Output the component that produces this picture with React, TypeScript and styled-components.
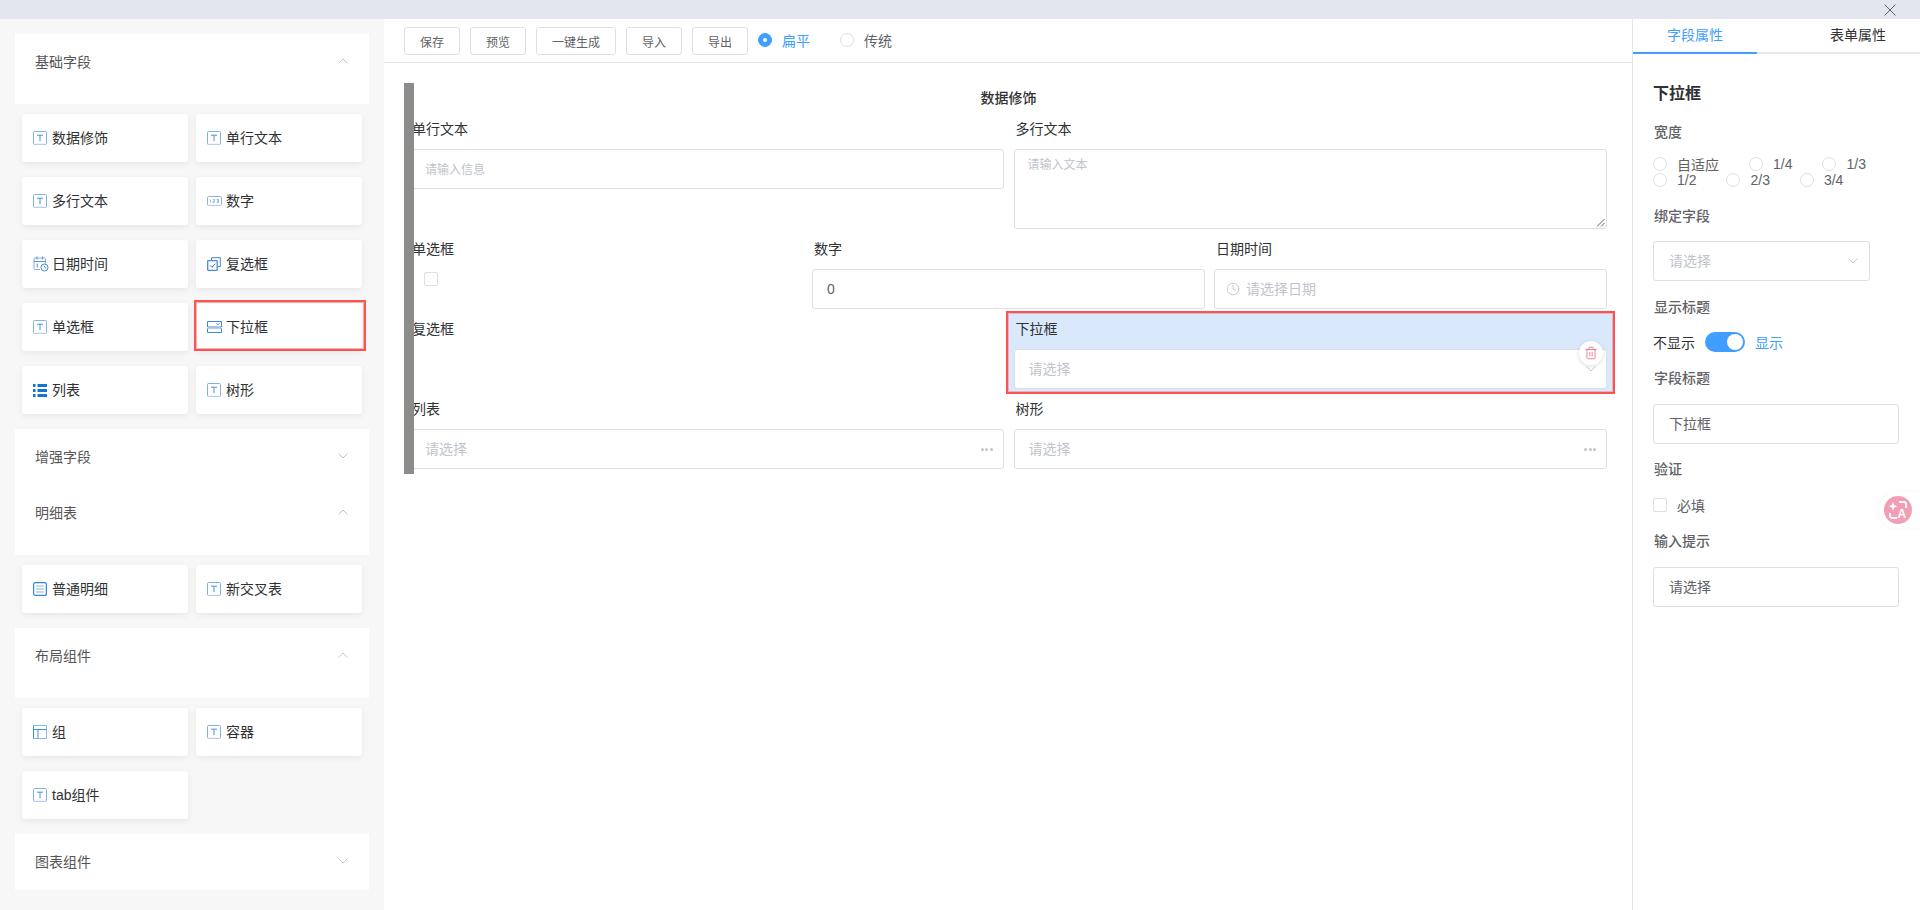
import React from 'react';
import styled, { createGlobalStyle } from 'styled-components';
import { Trash2, Clock } from 'lucide-react';

const GlobalStyle = createGlobalStyle`
  html, body { margin: 0; padding: 0; height: 100%; background: #fff; }
  body {
    font-family: "Liberation Sans", "Noto Sans CJK SC", sans-serif;
    font-size: 14px;
    color: #303133;
    overflow: hidden;
  }
  * { box-sizing: border-box; }
`;

const Page = styled.div`
  width: 1920px;
  height: 910px;
  display: flex;
  flex-direction: column;
  overflow: hidden;
`;

const TopBar = styled.div`
  height: 19px;
  flex: none;
  background: #e3e6ee;
  display: flex;
  justify-content: flex-end;
  align-items: center;
  padding-right: 24px;
`;

const Body = styled.div`
  flex: 1;
  display: flex;
  min-height: 0;
`;

/* left column */
const Sidebar = styled.aside`
  width: 384px;
  flex: none;
  background: #f7f7f7;
  padding: 15px 15px 0;
`;

const GroupHeader = styled.div<{ $open?: boolean }>`
  height: ${(p) => (p.$open ? 70 : 56)}px;
  background: #fff;
  padding: 18px 21px 0 20px;
  display: flex;
  justify-content: space-between;
  align-items: flex-start;
  line-height: 20px;
  color: #555;

  svg { margin-top: 6px; }
`;

const CardGrid = styled.div`
  display: grid;
  grid-template-columns: 166px 166px;
  column-gap: 8px;
  row-gap: 15px;
  padding: 10px 7px 15px;
`;

const Card = styled.div<{ $picked?: boolean }>`
  position: relative;
  height: 48px;
  background: #fff;
  border-radius: 3px;
  box-shadow: 0 2px 6px rgba(0, 0, 0, 0.07);
  display: flex;
  align-items: center;
  padding: 0 0 2px 11px;
  color: #303133;

  ${(p) =>
    p.$picked &&
    `
    &::after {
      content: '';
      position: absolute;
      inset: -3px -4px 0 -2px;
      border: 2px solid #fb5454;
      box-shadow: inset 0 0 0 1px rgba(251, 84, 84, 0.45);
    }
  `}
`;

const IconSlot = styled.span`
  width: 19px;
  height: 16px;
  flex: none;
  display: flex;
  align-items: center;
  margin-top: 2px;
  svg { display: block; }
`;

/* middle column */
const Main = styled.main`
  flex: 1;
  min-width: 0;
  background: #fff;
`;

const Toolbar = styled.div`
  height: 44px;
  border-bottom: 1px solid #e4e7ed;
  padding: 8px 0 0 20px;
  display: flex;
  align-items: flex-start;
  gap: 10px;
`;

const ToolButton = styled.button`
  height: 28px;
  padding: 0 15px;
  background: #fff;
  border: 1px solid #dcdfe6;
  border-radius: 3px;
  font: inherit;
  font-size: 12px;
  color: #606266;
`;

const StyleRadio = styled.label<{ $on?: boolean; $first?: boolean }>`
  display: flex;
  align-items: center;
  gap: 10px;
  height: 26px;
  margin-left: ${(p) => (p.$first ? 0 : 20)}px;
  color: ${(p) => (p.$on ? '#409eff' : '#606266')};
`;

const RadioDot = styled.span<{ $on?: boolean }>`
  width: 14px;
  height: 14px;
  flex: none;
  border-radius: 50%;
  background: ${(p) => (p.$on ? '#409eff' : '#fff')};
  border: 1px solid ${(p) => (p.$on ? '#409eff' : '#dcdfe6')};
  display: flex;
  align-items: center;
  justify-content: center;

  &::after {
    content: '';
    width: 4px;
    height: 4px;
    border-radius: 50%;
    background: ${(p) => (p.$on ? '#fff' : 'transparent')};
  }
`;

const Form = styled.div`
  position: relative;
  width: 1203px;
  margin: 20px 0 0 20px;
  padding: 5px 0 5px 6px;

  &::before {
    content: '';
    position: absolute;
    z-index: 1;
    left: 0;
    top: 0;
    bottom: 0;
    width: 10px;
    background: #8c8d8b;
  }
`;

const FormTitle = styled.div`
  height: 20px;
  line-height: 20px;
  margin-bottom: 11px;
  text-align: center;
  font-weight: 500;
  color: #303133;
`;

const Row = styled.div<{ $cols: number; $gap: number }>`
  display: grid;
  grid-template-columns: repeat(${(p) => p.$cols}, 1fr);
  column-gap: ${(p) => p.$gap}px;
  padding-bottom: 10px;
  align-items: start;

  &:last-child { padding-bottom: 0; }
`;

const Field = styled.div<{ $selected?: boolean }>`
  position: relative;
  min-width: 0;

  ${(p) =>
    p.$selected &&
    `
    margin: -8px -8px -5px -8px;
    padding: 6px 6px 3px;
    border: 2px solid #f95353;
    box-shadow: inset 0 0 0 1px rgba(249, 83, 83, 0.35);
    background: #d9e9fb;
  `}
`;

const FieldLabel = styled.div`
  height: 20px;
  line-height: 20px;
  margin-bottom: 10px;
  padding-left: 2px;
  color: #303133;
`;

const Input = styled.div<{ $small?: boolean; $filled?: boolean }>`
  height: 40px;
  background: #fff;
  border: 1px solid #dcdfe6;
  border-radius: 3px;
  padding: 0 14px 2px;
  display: flex;
  align-items: center;
  justify-content: space-between;
  font-size: ${(p) => (p.$small ? 12 : 14)}px;
  color: ${(p) => (p.$filled ? '#606266' : '#c0c4cc')};

  > svg { margin: 2px -4px 0 0; }
`;

const NumberInput = styled(Input)`
  padding-bottom: 0;
`;

const DateInput = styled(Input)`
  justify-content: flex-start;
  gap: 6px;
  padding-left: 11px;

  > svg { margin: 2px 0 0; }
`;

const TextArea = styled.div`
  position: relative;
  height: 80px;
  background: #fff;
  border: 1px solid #dcdfe6;
  border-radius: 3px;
  padding: 6px 13px;
  font-size: 12px;
  line-height: 18px;
  color: #c0c4cc;
`;

const ResizeGrip = styled.svg`
  position: absolute;
  right: 1px;
  bottom: 1px;
`;

const EmptyCheck = styled.span<{ $tight?: boolean }>`
  display: block;
  width: 14px;
  height: 14px;
  flex: none;
  background: #fff;
  border: 1px solid #dcdfe6;
  border-radius: 2px;
  margin: ${(p) => (p.$tight ? 0 : '13px 0 0 14px')};
`;

const RadioSpacer = styled.div`
  height: 40px;
`;

const Dots = styled.span`
  display: flex;
  gap: 1.5px;
  margin: 2px -4px 0 0;

  i {
    width: 3px;
    height: 3px;
    border-radius: 50%;
    background: #c0c4cc;
  }
`;

const DeleteBubble = styled.span`
  position: absolute;
  right: 10px;
  top: 28px;
  width: 24px;
  height: 24px;
  border-radius: 50%;
  background: #fff;
  box-shadow: 0 1px 4px rgba(0, 0, 0, 0.14);
  display: flex;
  align-items: center;
  justify-content: center;
  color: #ee5f78;
`;

/* right column */
const Props = styled.aside`
  position: relative;
  width: 288px;
  flex: none;
  background: #fff;
  border-left: 1px solid #e4e7ed;
`;

const Tabs = styled.div`
  height: 35px;
  display: flex;
  border-bottom: 2px solid #e4e7ed;
`;

const Tab = styled.div<{ $active?: boolean }>`
  height: 35px;
  line-height: 33px;
  ${(p) =>
    p.$active
      ? `
    width: 124px;
    text-align: center;
    color: #409eff;
    border-bottom: 2px solid #409eff;
  `
      : `
    padding-left: 73px;
    color: #303133;
  `}
`;

const PropsBody = styled.div`
  padding: 29px 20px 0;
`;

const PropsTitle = styled.div`
  font-size: 16px;
  line-height: 22px;
  font-weight: 600;
  color: #303133;
  margin-bottom: 17px;
`;

const PropLabel = styled.div`
  height: 20px;
  line-height: 20px;
  padding-left: 1px;
  font-weight: 500;
  color: #606266;
`;

const WidthOptions = styled.div`
  display: flex;
  flex-wrap: wrap;
  width: 246px;
  margin: 14px 0 18px;
`;

const WidthOption = styled.label`
  display: flex;
  align-items: center;
  gap: 10px;
  height: 16px;
  margin-right: 30px;
  color: #606266;
`;

const PropSelect = styled(Input)`
  width: 217px;
  margin: 15px 0 16px;
  padding-left: 15px;
  padding-right: 15px;
`;

const PropInput = styled(Input)`
  width: 246px;
  margin: 16px 0 15px;
  padding-left: 15px;
`;

const ToggleRow = styled.div`
  display: flex;
  align-items: center;
  height: 20px;
  margin: 15px 0 16px;
`;

const Toggle = styled.span`
  position: relative;
  width: 40px;
  height: 20px;
  margin: 0 10px;
  border-radius: 10px;
  background: #409eff;

  &::after {
    content: '';
    position: absolute;
    right: 2px;
    top: 2px;
    width: 16px;
    height: 16px;
    border-radius: 50%;
    background: #fff;
  }
`;

const ToggleOn = styled.span`
  color: #409eff;
`;

const CheckRow = styled.label`
  display: flex;
  align-items: center;
  gap: 10px;
  height: 20px;
  margin: 16px 0 16px;
  color: #606266;
`;

const TranslatePill = styled.div`
  position: absolute;
  right: 0;
  top: 473px;
  width: 41px;
  height: 36px;
  background: #fff;
  border-radius: 18px 0 0 18px;
  box-shadow: -1px 0 4px rgba(0, 0, 0, 0.04);
  display: flex;
  align-items: center;
  padding-left: 5px;
`;

const TranslateBall = styled.span`
  width: 28px;
  height: 28px;
  border-radius: 50%;
  background: #f29fb5;
  display: flex;
  align-items: center;
  justify-content: center;
`;

/* icons */
const TextIcon = () => (
  <svg width="14" height="14" viewBox="0 0 14 14" fill="none">
    <rect x="0.5" y="0.5" width="13" height="13" rx="1" stroke="#7fb0e8" />
    <path d="M1 13.4h12" stroke="#b9cde8" strokeWidth="1.2" />
    <path d="M4 4.2h6M7 4.2v6" stroke="#4a90e2" />
  </svg>
);

const NumberIcon = () => (
  <svg width="15" height="10" viewBox="0 0 15 10" fill="none">
    <rect x="0.5" y="0.5" width="14" height="9" rx="1" stroke="#8fb2e2" />
    <path d="M1 9.4h13" stroke="#b9cde8" />
    <path d="M3.5 3.5v3M6 3.5h1.6v1.5H6v1.5h1.6M9.5 3.5h2v3h-2M10 5h1.5" stroke="#6d9fdc" strokeWidth="0.7" />
  </svg>
);

const DateIcon = () => (
  <svg width="16" height="16" viewBox="0 0 16 16" fill="none">
    <path d="M7 13.5H2a1 1 0 0 1-1-1V3a1 1 0 0 1 1-1h9.500a1 1 0 0 1 1 1v4.500" stroke="#8aa9df" />
    <path d="M1 5.500h11.500M4 .5v3M9.500.5v3" stroke="#5b93dd" />
    <path d="M4.200 7.500v4" stroke="#5b7fc0" />
    <circle cx="11.500" cy="11.500" r="3.500" stroke="#3d86dd" />
    <path d="M11.200 9.800l1.400 2.700" stroke="#3d86dd" />
  </svg>
);

const CopyCheckIcon = () => (
  <svg width="14" height="14" viewBox="0 0 14 14" fill="none">
    <path d="M4.500 3V.7h8.800v8.800H10.800" stroke="#3f86d8" />
    <rect x="0.700" y="3.700" width="9.500" height="9.600" rx="0.500" stroke="#4a8cd8" strokeWidth="1.300" />
    <path d="M3 8.300l2 2 3.200-3.600" stroke="#2f78cf" />
  </svg>
);

const DropdownIcon = () => (
  <svg width="15" height="12" viewBox="0 0 15 12" fill="none">
    <path d="M.5 6V.5h14V6z" stroke="#3f86d8" />
    <path d="M9.500 2.300l1.500 1.500 1.500-1.500" stroke="#3f7fcc" />
    <path d="M.5 7.500h14" stroke="#b5cbe8" strokeWidth="1.200" />
    <path d="M.5 7.500v4h14v-4" stroke="#3f86d8" />
  </svg>
);

const ListIcon = () => (
  <svg width="14" height="13" viewBox="0 0 14 13" fill="#1473d8">
    <rect x="0" y="0" width="2.500" height="3" />
    <rect x="4.500" y="0" width="9.500" height="3" />
    <rect x="0" y="5" width="2.500" height="3" />
    <rect x="4.500" y="5" width="9.500" height="3" />
    <rect x="0" y="10" width="2.500" height="3" />
    <rect x="4.500" y="10" width="9.500" height="3" />
  </svg>
);

const DetailIcon = () => (
  <svg width="14" height="14" viewBox="0 0 14 14" fill="none">
    <rect x="0.600" y="0.600" width="12.800" height="12.800" rx="2" stroke="#2f86e0" strokeWidth="1.200" />
    <path d="M3 4h8M3 7h8M3 10h8" stroke="#8fb0de" strokeWidth="1.200" />
  </svg>
);

const LayoutIcon = () => (
  <svg width="14" height="14" viewBox="0 0 14 14" fill="none">
    <rect x="0.500" y="0.500" width="13" height="13" stroke="#8db9ea" />
    <path d="M.5 4.500h13M5 4.500v9" stroke="#3f8fe4" />
    <path d="M.5.500v13" stroke="#3f8fe4" />
  </svg>
);

const Chevron = ({ up, color = '#c0c4cc' }: { up?: boolean; color?: string }) => (
  <svg width="10" height="6" viewBox="0 0 10 6" fill="none">
    <path d={up ? 'M.5 5.500L5 1l4.500 4.500' : 'M.5.500L5 5 9.500.500'} stroke={color} />
  </svg>
);

const CloseIcon = () => (
  <svg width="12" height="12" viewBox="0 0 12 12" fill="none">
    <path d="M.5.500l11 11M11.500.500l-11 11" stroke="#606266" />
  </svg>
);

const TranslateIcon = () => (
  <svg width="22" height="22" viewBox="0 0 22 22" fill="none">
    <path d="M6 3l1.200 3 3 1.200-3 1.200L6 11.500 4.800 8.400l-3-1.200 3-1.200z" fill="#fff" />
    <path d="M12 3h5a2 2 0 0 1 2 2v4M10 19H5a2 2 0 0 1-2-2v-3" stroke="#fff" strokeWidth="1.800" />
    <text x="10.500" y="19" fontSize="12" fontWeight="700" fill="#fff" fontFamily="Liberation Sans, sans-serif">A</text>
  </svg>
);

const ThreeDots = () => (
  <Dots>
    <i />
    <i />
    <i />
  </Dots>
);

function FieldCard({ icon, label, picked }: { icon?: React.ReactNode; label: string; picked?: boolean }) {
  return (
    <Card $picked={picked}>
      <IconSlot>{icon ?? <TextIcon />}</IconSlot>
      {label}
    </Card>
  );
}

export default function App() {
  return (
    <Page>
      <GlobalStyle />
      <TopBar>
        <CloseIcon />
      </TopBar>
      <Body>
        <Sidebar>
          <GroupHeader $open>
            基础字段
            <Chevron up />
          </GroupHeader>
          <CardGrid>
            <FieldCard label="数据修饰" />
            <FieldCard label="单行文本" />
            <FieldCard label="多行文本" />
            <FieldCard label="数字" icon={<NumberIcon />} />
            <FieldCard label="日期时间" icon={<DateIcon />} />
            <FieldCard label="复选框" icon={<CopyCheckIcon />} />
            <FieldCard label="单选框" />
            <FieldCard label="下拉框" icon={<DropdownIcon />} picked />
            <FieldCard label="列表" icon={<ListIcon />} />
            <FieldCard label="树形" />
          </CardGrid>
          <GroupHeader>
            增强字段
            <Chevron />
          </GroupHeader>
          <GroupHeader $open>
            明细表
            <Chevron up />
          </GroupHeader>
          <CardGrid>
            <FieldCard label="普通明细" icon={<DetailIcon />} />
            <FieldCard label="新交叉表" />
          </CardGrid>
          <GroupHeader $open>
            布局组件
            <Chevron up />
          </GroupHeader>
          <CardGrid>
            <FieldCard label="组" icon={<LayoutIcon />} />
            <FieldCard label="容器" />
            <FieldCard label="tab组件" />
          </CardGrid>
          <GroupHeader>
            图表组件
            <Chevron />
          </GroupHeader>
        </Sidebar>

        <Main>
          <Toolbar>
            <ToolButton>保存</ToolButton>
            <ToolButton>预览</ToolButton>
            <ToolButton>一键生成</ToolButton>
            <ToolButton>导入</ToolButton>
            <ToolButton>导出</ToolButton>
            <StyleRadio $on $first>
              <RadioDot $on />
              扁平
            </StyleRadio>
            <StyleRadio>
              <RadioDot />
              传统
            </StyleRadio>
          </Toolbar>
          <Form>
            <FormTitle>数据修饰</FormTitle>
            <Row $cols={2} $gap={10}>
              <Field>
                <FieldLabel>单行文本</FieldLabel>
                <Input $small>请输入信息</Input>
              </Field>
              <Field>
                <FieldLabel>多行文本</FieldLabel>
                <TextArea>
                  请输入文本
                  <ResizeGrip width="9" height="9" viewBox="0 0 9 9" fill="none">
                    <path d="M8.500 1L1 8.500M8.500 5L5 8.500" stroke="#606266" />
                  </ResizeGrip>
                </TextArea>
              </Field>
            </Row>
            <Row $cols={3} $gap={9}>
              <Field>
                <FieldLabel>单选框</FieldLabel>
                <EmptyCheck />
              </Field>
              <Field>
                <FieldLabel>数字</FieldLabel>
                <NumberInput $filled>0</NumberInput>
              </Field>
              <Field>
                <FieldLabel>日期时间</FieldLabel>
                <DateInput>
                  <Clock size={14} strokeWidth={1.5} />
                  请选择日期
                </DateInput>
              </Field>
            </Row>
            <Row $cols={2} $gap={10}>
              <Field>
                <FieldLabel>复选框</FieldLabel>
                <RadioSpacer />
              </Field>
              <Field $selected>
                <FieldLabel>下拉框</FieldLabel>
                <Input>
                  请选择
                  <Chevron color="#c0c4cc" />
                </Input>
                <DeleteBubble>
                  <Trash2 size={14} strokeWidth={1.3} />
                </DeleteBubble>
              </Field>
            </Row>
            <Row $cols={2} $gap={10}>
              <Field>
                <FieldLabel>列表</FieldLabel>
                <Input>
                  请选择
                  <ThreeDots />
                </Input>
              </Field>
              <Field>
                <FieldLabel>树形</FieldLabel>
                <Input>
                  请选择
                  <ThreeDots />
                </Input>
              </Field>
            </Row>
          </Form>
        </Main>

        <Props>
          <Tabs>
            <Tab $active>字段属性</Tab>
            <Tab>表单属性</Tab>
          </Tabs>
          <PropsBody>
            <PropsTitle>下拉框</PropsTitle>
            <PropLabel>宽度</PropLabel>
            <WidthOptions>
              {['自适应', '1/4', '1/3', '1/2', '2/3', '3/4'].map((w) => (
                <WidthOption key={w}>
                  <RadioDot />
                  {w}
                </WidthOption>
              ))}
            </WidthOptions>
            <PropLabel>绑定字段</PropLabel>
            <PropSelect>
              请选择
              <Chevron />
            </PropSelect>
            <PropLabel>显示标题</PropLabel>
            <ToggleRow>
              不显示
              <Toggle />
              <ToggleOn>显示</ToggleOn>
            </ToggleRow>
            <PropLabel>字段标题</PropLabel>
            <PropInput $filled>下拉框</PropInput>
            <PropLabel>验证</PropLabel>
            <CheckRow>
              <EmptyCheck $tight />
              必填
            </CheckRow>
            <PropLabel>输入提示</PropLabel>
            <PropInput $filled>请选择</PropInput>
          </PropsBody>
          <TranslatePill>
            <TranslateBall>
              <TranslateIcon />
            </TranslateBall>
          </TranslatePill>
        </Props>
      </Body>
    </Page>
  );
}
